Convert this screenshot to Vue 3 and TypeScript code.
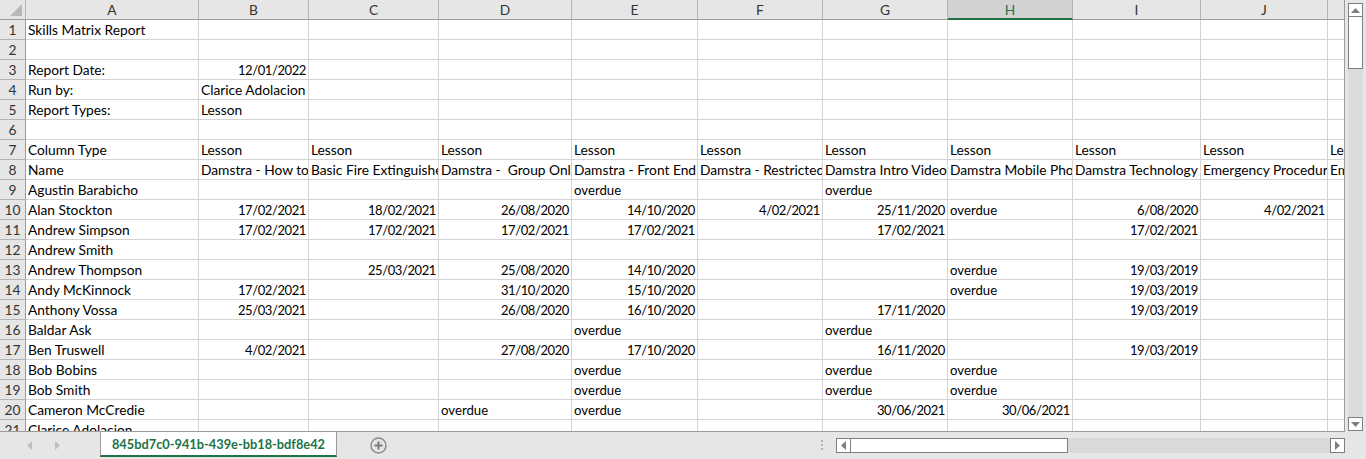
<script setup lang="ts">
type Cell = string | { r: string }
const d = (r: string): Cell => ({ r })
const cols = ['A', 'B', 'C', 'D', 'E', 'F', 'G', 'H', 'I', 'J', '']
const rows: Cell[][] = [
  ['Skills Matrix Report'],
  [],
  ['Report Date:', d('12/01/2022')],
  ['Run by:', 'Clarice Adolacion'],
  ['Report Types:', 'Lesson'],
  [],
  ['Column Type', 'Lesson', 'Lesson', 'Lesson', 'Lesson', 'Lesson', 'Lesson', 'Lesson', 'Lesson', 'Lesson', 'Lesson'],
  ['Name', 'Damstra - How to Use', 'Basic Fire Extinguisher', 'Damstra -  Group Online', 'Damstra - Front End User', 'Damstra - Restricted Access', 'Damstra Intro Video', 'Damstra Mobile Phone', 'Damstra Technology', 'Emergency Procedures', 'Emergency'],
  ['Agustin Barabicho', '', '', '', 'overdue', '', 'overdue'],
  ['Alan Stockton', d('17/02/2021'), d('18/02/2021'), d('26/08/2020'), d('14/10/2020'), d('4/02/2021'), d('25/11/2020'), 'overdue', d('6/08/2020'), d('4/02/2021')],
  ['Andrew Simpson', d('17/02/2021'), d('17/02/2021'), d('17/02/2021'), d('17/02/2021'), '', d('17/02/2021'), '', d('17/02/2021')],
  ['Andrew Smith'],
  ['Andrew Thompson', '', d('25/03/2021'), d('25/08/2020'), d('14/10/2020'), '', '', 'overdue', d('19/03/2019')],
  ['Andy McKinnock', d('17/02/2021'), '', d('31/10/2020'), d('15/10/2020'), '', '', 'overdue', d('19/03/2019')],
  ['Anthony Vossa', d('25/03/2021'), '', d('26/08/2020'), d('16/10/2020'), '', d('17/11/2020'), '', d('19/03/2019')],
  ['Baldar Ask', '', '', '', 'overdue', '', 'overdue'],
  ['Ben Truswell', d('4/02/2021'), '', d('27/08/2020'), d('17/10/2020'), '', d('16/11/2020'), '', d('19/03/2019')],
  ['Bob Bobins', '', '', '', 'overdue', '', 'overdue', 'overdue'],
  ['Bob Smith', '', '', '', 'overdue', '', 'overdue', 'overdue'],
  ['Cameron McCredie', '', '', 'overdue', 'overdue', '', d('30/06/2021'), d('30/06/2021')],
  ['Clarice Adolacion'],
]
const cellsOf = (row: Cell[]) =>
  cols.map((_, i) => {
    const c = row[i] ?? ''
    return typeof c === 'string' ? { text: c, right: false } : { text: c.r, right: true }
  })
</script>

<template>
  <div class="app">
    <div class="main">
      <div class="sheet">
        <div class="corner"><span class="tri"></span></div>
        <div v-for="c in cols" :key="c" class="ch" :class="{ sel: c === 'H' }">{{ c }}</div>
        <template v-for="(row, ri) in rows" :key="ri">
          <div class="rh">{{ ri + 1 }}</div>
          <div
            v-for="(cell, ci) in cellsOf(row)"
            :key="ci"
            class="cell"
            :class="{ right: cell.right, over: cell.text === 'overdue' }"
          >{{ cell.text }}</div>
        </template>
      </div>
      <div class="vbar">
        <div class="vbtn"><svg width="9" height="5" viewBox="0 0 9 5"><path d="M0 5 4.5 0 9 5z" fill="#7f7f7f" /></svg></div>
        <div class="vthumb"></div>
        <div class="vtrack"></div>
        <div class="vbtn"><svg width="9" height="5" viewBox="0 0 9 5"><path d="M0 0 4.5 5 9 0z" fill="#7f7f7f" /></svg></div>
      </div>
    </div>
    <div class="tabs">
      <div class="nav">
        <svg width="5" height="9" viewBox="0 0 5 9"><path d="M5 0 0 4.5 5 9z" fill="#bfbfbf" /></svg>
        <svg width="5" height="9" viewBox="0 0 5 9"><path d="M0 0 5 4.5 0 9z" fill="#bfbfbf" /></svg>
      </div>
      <div class="tab">845bd7c0-941b-439e-bb18-bdf8e42</div>
      <div class="add">
        <svg width="17" height="17" viewBox="0 0 17 17"><circle cx="8.5" cy="8.5" r="7.5" fill="none" stroke="#8a8a8a" stroke-width="1.4" /><path d="M8.5 4.5v8M4.5 8.5h8" stroke="#7a7a7a" stroke-width="2" /></svg>
      </div>
      <div class="grip"><i></i><i></i><i></i></div>
      <div class="hbar">
        <div class="hbtn"><svg width="5" height="9" viewBox="0 0 5 9"><path d="M5 0 0 4.5 5 9z" fill="#7f7f7f" /></svg></div>
        <div class="hthumb"></div>
        <div class="htrack"></div>
        <div class="hbtn"><svg width="5" height="9" viewBox="0 0 5 9"><path d="M0 0 5 4.5 0 9z" fill="#7f7f7f" /></svg></div>
      </div>
    </div>
  </div>
</template>

<style>
html, body { margin: 0; background: #e6e6e6; overflow: hidden; }
</style>

<style scoped>
.app {
  width: 1366px;
  height: 459px;
  display: flex;
  flex-direction: column;
  background: #e6e6e6;
  font-family: Lato, "Open Sans", sans-serif;
  font-size: 13.75px;
  color: #000;
  overflow: hidden;
}
.main { display: flex; height: 432px; flex: none; }
.sheet {
  width: 1345px;
  height: 432px;
  flex: none;
  display: grid;
  grid-template-columns: 26px 173px 110px 130px 133px 126px 125px 125px 125px 128px 127px 18px;
  grid-auto-rows: 20px;
  overflow: hidden;
  background: #fff;
  border-bottom: 1px solid #9b9b9b;
  border-right: 1px solid #9b9b9b;
  box-sizing: border-box;
}
.corner {
  background: #e6e6e6;
  border-right: 1px solid #b4b4b4;
  border-bottom: 1px solid #9b9b9b;
  box-sizing: border-box;
  display: flex;
  align-items: flex-end;
  justify-content: flex-end;
  padding: 0 3px 3px 0;
}
.tri { width: 0; height: 0; border-left: 12px solid transparent; border-bottom: 12px solid #b8b8b8; }
.ch {
  background: #e6e6e6;
  border-right: 1px solid #b4b4b4;
  border-bottom: 1px solid #9b9b9b;
  box-sizing: border-box;
  text-align: center;
  line-height: 19px;
  color: #333;
}
.ch.sel { background: #d2d2d2; color: #217346; border-bottom: 2px solid #217346; }
.rh {
  background: #e6e6e6;
  border-right: 1px solid #9b9b9b;
  border-bottom: 1px solid #b4b4b4;
  box-sizing: border-box;
  text-align: center;
  line-height: 20px;
  color: #333;
}
.cell {
  border-right: 1px solid #d4d4d4;
  border-bottom: 1px solid #d4d4d4;
  box-sizing: border-box;
  padding: 0 2px;
  line-height: 20px;
  white-space: pre;
  overflow: hidden;
}
.cell.right { text-align: right; font-size: 13px; letter-spacing: -0.4px; line-height: 21px; }
.cell.over { font-size: 13.2px; line-height: 21px; }
.vbar { width: 21px; flex: none; display: flex; flex-direction: column; padding: 3px 3px 1px; box-sizing: border-box; }
.vbtn {
  height: 14px;
  flex: none;
  box-sizing: border-box;
  border: 1px solid #7f7f7f;
  background: #fff;
  display: flex;
  align-items: center;
  justify-content: center;
}
.vthumb { height: 52px; flex: none; box-sizing: border-box; border: 1px solid #7f7f7f; border-top: 0; background: #fff; }
.vtrack { flex: 1; background: #dcdcdc; }
.tabs { flex: 1; display: flex; align-items: flex-start; padding-right: 21px; }
.nav { width: 100px; height: 27px; flex: none; display: flex; align-items: center; gap: 23px; padding-left: 27px; box-sizing: border-box; }
.tab {
  width: 237px;
  height: 25px;
  flex: none;
  box-sizing: border-box;
  background: #fff;
  border-left: 1px solid #9b9b9b;
  border-right: 1px solid #9b9b9b;
  border-bottom: 2px solid #217346;
  text-align: center;
  color: #217346;
  font-weight: 700;
  line-height: 24px;
  font-size: 12.8px;
}
.add { height: 26px; flex: none; display: flex; align-items: center; padding-left: 33px; box-sizing: border-box; }
.grip { margin-left: auto; width: 17px; height: 27px; padding: 8px 0 0 2px; box-sizing: border-box; flex: none; display: flex; flex-direction: column; gap: 2px; }
.grip i { display: block; width: 2px; height: 2px; background: #b5b5b5; }
.hbar { width: 509px; height: 15px; margin-top: 6px; flex: none; display: flex; }
.hbtn { width: 15px; flex: none; box-sizing: border-box; border: 1px solid #7f7f7f; background: #fff; display: flex; align-items: center; justify-content: center; }
.hthumb { width: 217px; flex: none; box-sizing: border-box; border: 1px solid #7f7f7f; border-left: 0; background: #fff; }
.htrack { flex: 1; background: #d9d9d9; }
</style>
